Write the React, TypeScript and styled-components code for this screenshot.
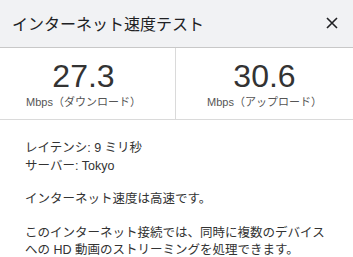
import React from 'react';
import { createGlobalStyle, styled } from 'styled-components';

const GlobalStyle = createGlobalStyle`
  html, body {
    margin: 0;
    padding: 0;
    background: #ffffff;
  }
  body {
    font-family: 'Liberation Sans', 'Noto Sans CJK JP', sans-serif;
  }
`;

const speeds = [
  { value: '27.3', label: 'Mbps（ダウンロード）' },
  { value: '30.6', label: 'Mbps（アップロード）' },
];

const App = () => {
  return (
    <>
      <GlobalStyle />
      <Dialog>
        <Header>
          <Title>インターネット速度テスト</Title>
          <CloseBtn aria-label='閉じる'>
            <svg width='12' height='12' viewBox='0 0 12 12'>
              <path d='M1 1 L11 11 M11 1 L1 11' stroke='#202124' strokeWidth='1.6' />
            </svg>
          </CloseBtn>
        </Header>
        <Results>
          {speeds.map((s, i) => (
            <Cell key={s.label} $first={i === 0}>
              <Value>{s.value}</Value>
              <Unit>{s.label}</Unit>
            </Cell>
          ))}
        </Results>
        <Details>
          <Info>
            <div>レイテンシ: 9 ミリ秒</div>
            <div>サーバー: Tokyo</div>
          </Info>
          <Paragraph>インターネット速度は高速です。</Paragraph>
          <Paragraph>
            このインターネット接続では、同時に複数のデバイス
            <br />
            への HD 動画のストリーミングを処理できます。
          </Paragraph>
        </Details>
      </Dialog>
    </>
  );
};

const Dialog = styled.div`
  width: 353px;
  height: 257px;
  overflow: hidden;
  background: #ffffff;
`;

const Header = styled.div`
  height: 48px;
  box-sizing: border-box;
  display: flex;
  align-items: center;
  justify-content: space-between;
  padding: 0 15px 2px 12px;
  background: #f1f2f4;
  border-bottom: 1px solid #c8c8c8;
`;

const Title = styled.div`
  font-size: 16px;
  color: #202124;
`;

const CloseBtn = styled.div`
  width: 12px;
  height: 12px;
  display: flex;
`;

const Results = styled.div`
  display: grid;
  grid-template-columns: 176px 1fr;
  border-bottom: 1px solid #dadada;
`;

const Cell = styled.div<{ $first: boolean }>`
  height: 71px;
  display: flex;
  flex-direction: column;
  align-items: center;
  padding-top: 12px;
  box-sizing: border-box;
  padding-right: ${({ $first }) => ($first ? '8px' : '0')};
  border-right: ${({ $first }) => ($first ? '1px solid #dadada' : 'none')};
`;

const Value = styled.div`
  font-size: 32px;
  line-height: 33px;
  color: #333333;
`;

const Unit = styled.div`
  margin-top: 2px;
  font-size: 11px;
  line-height: 14px;
  color: #555555;
`;

const Details = styled.div`
  padding: 19px 24px 0 25px;
  font-size: 12.5px;
  line-height: 18px;
  color: #333333;
`;

const Info = styled.div`
  margin-bottom: 15px;
`;

const Paragraph = styled.p`
  margin: 0 0 17px;
  &:last-child {
    margin-bottom: 0;
    line-height: 17px;
  }
`;

export default App;
